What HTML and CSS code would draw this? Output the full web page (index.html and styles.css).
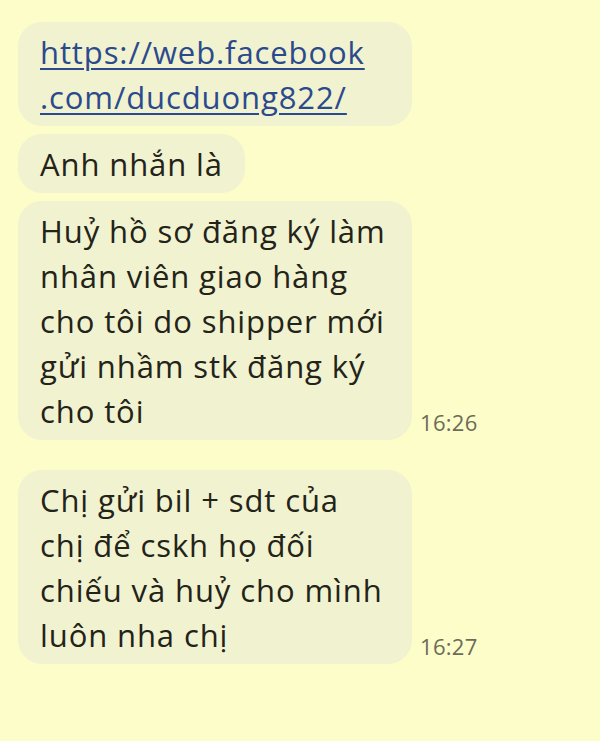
FILE: index.html
```html
<!DOCTYPE html>
<html lang="vi">
<head>
<meta charset="utf-8">
<title>Chat</title>
<link rel="stylesheet" href="styles.css">
</head>
<body>
<main class="chat">
  <div class="group">
    <div class="row">
      <div class="bubble full"><a class="link" href="#">https://web.facebook<br>.com/ducduong822/</a></div>
    </div>
    <div class="row">
      <div class="bubble">Anh nhắn là</div>
    </div>
    <div class="row">
      <div class="bubble full">Huỷ hồ sơ đăng ký làm<br>nhân viên giao hàng<br>cho tôi do shipper mới<br>gửi nhầm stk đăng ký<br>cho tôi</div>
      <span class="time">16:26</span>
    </div>
  </div>
  <div class="group">
    <div class="row">
      <div class="bubble full">Chị gửi bil + sdt của<br>chị để cskh họ đối<br>chiếu và huỷ cho mình<br>luôn nha chị</div>
      <span class="time">16:27</span>
    </div>
  </div>
</main>
</body>
</html>
```
FILE: styles.css
```css
html, body {
  margin: 0;
  padding: 0;
  background: #fdfdc9;
}
body {
  width: 600px;
  height: 741px;
  overflow: hidden;
  font-family: "Open Sans", "Liberation Sans", sans-serif;
  color: #232319;
}
.chat {
  padding: 22px 0 0 18px;
  display: flex;
  flex-direction: column;
  gap: 30px;
}
.group {
  display: flex;
  flex-direction: column;
  gap: 8px;
}
.row {
  display: flex;
  align-items: flex-end;
  gap: 8px;
}
.bubble {
  background: #f1f2cf;
  border-radius: 24px;
  padding: 8px 22px 6px;
  font-size: 31px;
  line-height: 45px;
  letter-spacing: 0.9px;
  white-space: nowrap;
}
.bubble.full {
  width: 350px;
}
.link {
  color: #2b4a8e;
  text-decoration: underline;
  text-decoration-thickness: 2px;
  text-underline-offset: 4px;
}
.time {
  font-size: 22px;
  letter-spacing: 0.3px;
  color: #6c6c58;
  line-height: 1;
  padding-bottom: 7px;
}
```
